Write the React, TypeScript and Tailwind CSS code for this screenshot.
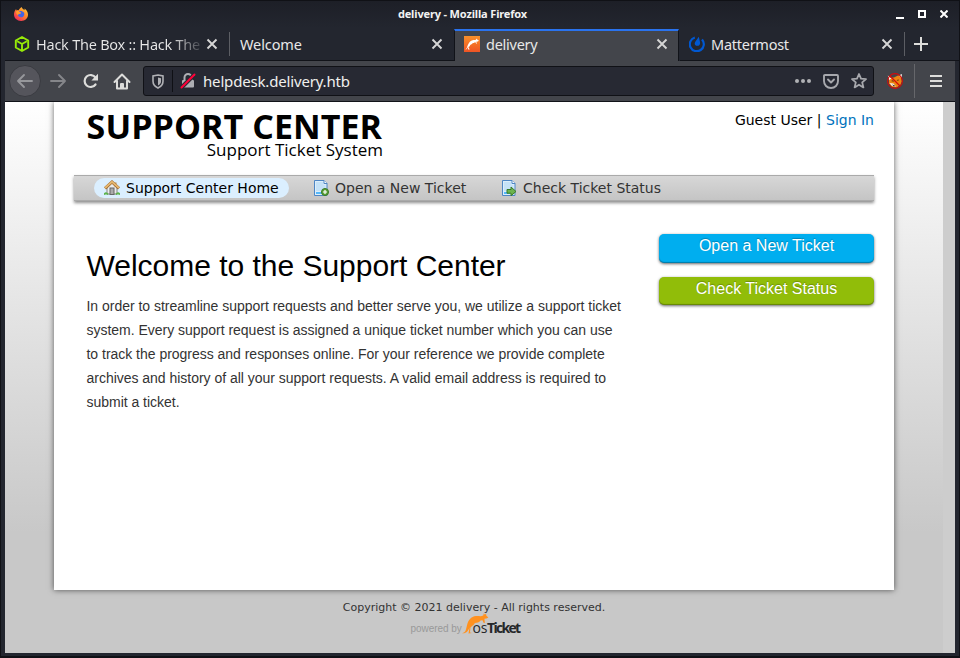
import type { ReactNode } from "react";

const uiFont = "font-['Noto_Sans',sans-serif]";
const pageFont = "font-['DejaVu_Sans',sans-serif]";
const bodyFont = "font-['Liberation_Sans',sans-serif]";

function FirefoxIcon() {
  return (
    <svg width="16" height="16" viewBox="0 0 16 16" className="mb-[1px] ml-[12px]">
      <defs>
        <linearGradient id="ff" x1="1" y1="0" x2=".2" y2="1">
          <stop offset="0" stopColor="#ffdf45" />
          <stop offset=".45" stopColor="#ff8a2b" />
          <stop offset="1" stopColor="#f0245c" />
        </linearGradient>
      </defs>
      <path d="M8.700 1c.2 1.500 1.600 2 3 3.200 0-.8-.3-1.400-.5-1.800C13.500 3.600 15 6 15 8.600 15 12.500 12 15 8.100 15 4 15 1 12.300 1 8.600c0-2.300.8-4 2.100-5.600l.4 1.700c.5-.5 1.500-.6 2.200-.4C6.300 3 7.300 1.700 8.700 1z" fill="url(#ff)" />
      <path d="M5.500 5.300c1.300-.8 4.600-.4 5.500 1.400.9 2-.4 4.600-2.900 4.600-2.100 0-3.600-1.500-3.300-3.200 1 .6 2.300.1 3.100-.8-1 0-1.900-.7-2.400-2z" fill="#4463e6" />
      <path d="M3.200 5c1-.8 2.300-.5 3.100.5 1 .9 2 .8 1.700 1.400-.2.700-1.300.6-2 .9-.6.300-.4 1.100-1.200 1.100C3.500 8.700 2.900 6.500 3.200 5z" fill="#ff9a2c" />
    </svg>
  );
}

function CloseIcon() {
  return (
    <svg width="12" height="12" viewBox="0 0 12 12" className="shrink-0">
      <path d="M1.500 1.500l9 9M10.500 1.500l-9 9" stroke="#d6d6d6" strokeWidth="1.900" />
    </svg>
  );
}

function CubeIcon() {
  return (
    <svg width="16" height="16" viewBox="0 0 16 16" fill="none" stroke="#97ea08" strokeWidth="1.900" strokeLinejoin="round" className="shrink-0">
      <path d="M8 1l6.200 3.500v7L8 15l-6.200-3.500v-7zM3.200 5.200L8 8l4.800-2.800M8 8v6" />
    </svg>
  );
}

function KangarooIcon() {
  return (
    <svg width="16" height="16" viewBox="0 0 16 16" className="shrink-0">
      <defs>
        <linearGradient id="kg" x1="0" y1="0" x2="0" y2="1">
          <stop offset="0" stopColor="#f9902a" />
          <stop offset="1" stopColor="#ef5425" />
        </linearGradient>
      </defs>
      <rect width="16" height="16" fill="url(#kg)" />
      <path d="M1.300 13.700c1.500-.8 1.800-2.800 2.600-4.600C5 6.500 6.500 4.600 8.600 4.200c1.300-.3 2.300 0 3.300-.4l.8-1.300.5 1L15 4.700l-1.200.7-1.500.3.700 2.200-.8-.3-1.100-1.500c-.6.900-1.500 1.100-2.500 1.200-.5.900-1.500 1-2.300 1.700l-1.600 2.500.9 2H4.200l-.2-1 .6-2.400c-.8 1.600-1.500 3.400-3.300 3.600z" fill="#fff" />
    </svg>
  );
}

function MattermostIcon() {
  return (
    <svg width="16" height="16" viewBox="0 0 16 16" className="shrink-0">
      <path d="M5.800 1.500A7 7 0 1 0 13 3.500" fill="none" stroke="#0058d2" strokeWidth="2.200" />
      <path d="M9.800.8l1.300 5.600c.3 2-1 3.400-2.800 3.400-2.300 0-3.300-2.200-2-4z" fill="#0058d2" />
    </svg>
  );
}

function Tab({ icon, label, active, fade, divider }: { icon?: ReactNode; label: string; active?: boolean; fade?: boolean; divider?: boolean }) {
  return (
    <div className={active
      ? "-ml-[1px] mr-[1px] mt-[1px] flex h-[32px] w-[225px] items-center border-x border-t-2 border-x-[#111319] border-t-[#2a73ee] bg-[#43454b] pb-[4px] pl-[9px] pr-[10px]"
      : "flex h-[33px] w-[225px] items-center border-b border-[#111319] pl-[9px] pr-[12px]"}>
      {icon}
      <span className={fade
        ? "ml-[6px] w-[165px] overflow-hidden whitespace-nowrap bg-[linear-gradient(to_right,#e8e8e8_82%,#23262f_103%)] bg-clip-text text-[14.5px] leading-[20px] tracking-[-0.240px] text-transparent"
        : icon ? "ml-[6px] whitespace-nowrap text-[14.5px] leading-[20px] tracking-[-0.260px] text-[#e8e8e8]" : "whitespace-nowrap pl-[1px] text-[14.5px] leading-[20px] tracking-[-0.100px] text-[#e8e8e8]"}>
        {label}
      </span>
      <span className="ml-auto"><CloseIcon /></span>
      {divider && <span className="-mr-[12px] ml-[11px] h-[24px] w-px bg-[#5c5e64]" />}
    </div>
  );
}

function Toolbar() {
  return (
    <div className="mx-[5px] flex h-[41px] items-center border-b border-[#111319] bg-[#43454b]">
      <div className="ml-[4px] flex h-8 w-8 items-center justify-center rounded-full border border-[#3a3b41] bg-[#55555c]">
        <svg width="18" height="16" viewBox="0 0 18 16" fill="none" stroke="#96979b" strokeWidth="1.900" strokeLinecap="round" strokeLinejoin="round"><path d="M16 8H2M8 2L2 8l6 6" /></svg>
      </div>
      <svg className="ml-[8px]" width="18" height="16" viewBox="0 0 18 16" fill="none" stroke="#85868a" strokeWidth="1.900" strokeLinecap="round" strokeLinejoin="round"><path d="M2 8h14M10 2l6 6-6 6" /></svg>
      <svg className="ml-[16px]" width="16" height="16" viewBox="0 0 16 16"><path d="M12.500 11.500A6 6 0 1 1 12.500 4.500" fill="none" stroke="#dddddb" strokeWidth="2.200" strokeLinecap="round" /><path d="M15 .8v6.700H8.400z" fill="#dddddb" /></svg>
      <svg className="ml-[14px]" width="18" height="17" viewBox="0 0 18 17" fill="none" stroke="#dddddb" strokeWidth="2" strokeLinecap="round" strokeLinejoin="round"><path d="M1.500 9L9 1.500 16.500 9M4 8v7.500h10V8M8 15v-4h2v4" /></svg>
      <div className="ml-[12px] flex h-[30px] w-[731px] items-center rounded-[3px] border border-[#101116] bg-[#272933]">
        <svg className="ml-[8px]" width="12" height="15" viewBox="0 0 12 15"><path d="M6 1l5 1v5.200c0 3-2 5.300-5 6.800-3-1.500-5-3.800-5-6.800V2z" fill="none" stroke="#b0b1b5" strokeWidth="1.600" /><path d="M6 3.500l3 .7v3.200c0 1.600-1.100 2.900-3 4z" fill="#b0b1b5" /></svg>
        <div className="ml-[8px] h-[22px] w-px bg-[#0f1015]" />
        <svg className="ml-[7px]" width="16" height="16" viewBox="0 0 16 16"><path d="M4.500 7V4.500a3.500 3.500 0 0 1 7 0V7" fill="none" stroke="#adaeb3" strokeWidth="2" /><rect x="2" y="7" width="12" height="7.500" rx="1" fill="#adaeb3" /><path d="M1.500 14.500l13-13" stroke="#272933" strokeWidth="4" /><path d="M1.500 14.500l13-13" stroke="#ff0039" strokeWidth="2" strokeLinecap="round" /></svg>
        <span className="ml-[7px] text-[15px] leading-5 tracking-[-0.170px] text-[#f0f0ee]">helpdesk.delivery.htb</span>
        <svg className="ml-auto" width="16" height="4" viewBox="0 0 16 4" fill="#b0b1b5"><circle cx="2" cy="2" r="2" /><circle cx="8" cy="2" r="2" /><circle cx="14" cy="2" r="2" /></svg>
        <svg className="ml-[12px]" width="16" height="15" viewBox="0 0 16 15" fill="none" stroke="#a7a8ad" strokeWidth="1.900" strokeLinecap="round" strokeLinejoin="round"><path d="M2 1h12q1 0 1 1v5c0 4-3 7-7 7s-7-3-7-7V2q0-1 1-1zM5 5.500l3 3 3-3" /></svg>
        <svg className="ml-[12px] mr-[6px]" width="16" height="16" viewBox="0 0 16 16" fill="none" stroke="#a7a8ad" strokeWidth="1.800" strokeLinejoin="round"><path d="M8 1l2 4.700 5 .4-3.800 3.300 1.200 5L8 11.700l-4.400 2.700 1.200-5L1 6.100l5-.4z" /></svg>
      </div>
      <svg className="ml-[13px]" width="16" height="16" viewBox="0 0 16 16"><path d="M2 5l5-.5L11 2.500l3 1.500.8 4.500-1.500 3.500-3.800 2.500-4.500-.5L2 10.500z" fill="#ed8411" /><path d="M.8 2.500L2 7l2.500-1.500zM15 1l-3.500 1.500L14.500 5zM2.500 10l4 .5 2.500 3-4-.5z" fill="#f5eee4" /><path d="M5 11.500l3 1-1 1z" fill="#222" /><path d="M4 8l2-1 1 2zM9.500 7.500l2-1.500v2z" fill="#7a3d0c" /><circle cx="8" cy="8" r="7.400" fill="none" stroke="#d20b0b" strokeWidth="1.100" /><path d="M3 3l10 10" stroke="#d20b0b" strokeWidth="1.200" /></svg>
      <div className="ml-[11px] h-[34px] w-px bg-[#66676b]" />
      <svg className="ml-[15px]" width="12" height="12" viewBox="0 0 12 12" fill="#dddddb"><path d="M0 0h12v2H0zM0 5h12v2H0zM0 10h12v2H0z" /></svg>
    </div>
  );
}

function HouseIcon() {
  return (
    <svg width="16" height="16" viewBox="0 0 16 16" className="shrink-0">
      <path d="M3 7l5-4.500L13 7v7H3z" fill="#ececec" stroke="#858585" />
      <path d="M10.500 2.500h2v4h-2z" fill="#b78750" />
      <rect x="6" y="8" width="4" height="6.500" fill="#aaa" stroke="#666" />
      <path d="M1 8.300L8 2l7 6.300" fill="none" stroke="#9c6728" strokeWidth="3" />
      <path d="M1 8L8 1.700 15 8" fill="none" stroke="#e5b670" strokeWidth="1.900" />
      <path d="M0 14.500q2-3 4 0M12 14.500q2-3 4 0" stroke="#5cb34a" strokeWidth="1.500" fill="#5cb34a" />
    </svg>
  );
}

function PageIcon({ arrow }: { arrow?: boolean }) {
  return (
    <svg width="16" height="16" viewBox="0 0 16 16" className="shrink-0">
      <path d="M1.500.5h9.500l3 3v12H1.500z" fill="#dceefb" stroke="#4e86c4" />
      <path d="M3 2h7.500v3h2v6H3z" fill="#c5e2f7" />
      <path d="M11 .5v3h3" fill="#fff" stroke="#4e86c4" />
      <path d="M3 12h6v2H3z" fill="#55b8fa" />
      {arrow ? (
        <path d="M6 9.500h4V7l5 4.500-5 4.200v-2.500H6z" fill="#6db44d" stroke="#397b26" />
      ) : (
        <><circle cx="12" cy="12" r="3.500" fill="#5ea33a" stroke="#377821" /><path d="M12 10v4M10 12h4" stroke="#fff" strokeWidth="1.200" /></>
      )}
    </svg>
  );
}

function OsTicketLogo() {
  return (
    <div className="mt-[-2px] flex h-[22px] items-end justify-center pr-[18px]">
      <span className="w-[50px] whitespace-nowrap pb-[1px] text-[10px] leading-[13px] tracking-[-0.060px] text-[#999] font-['Liberation_Sans',sans-serif]">powered by</span>
      <svg width="28" height="22" viewBox="0 0 28 22" className="mb-[1px] mr-[-16px]">
        <path d="M1 20.300c4-.8 4-4 5-8 1-5 4-8.800 9-9.300 3-.3 5 1 7.500-.7L22.500.5l1.500 1 1-1 .4 2.200 2 1.800-2 1-2 .3.500 4.200-1.400-.2-1-2.500-2 .3c-1.200 2.400-4 2-6 2.800-1 2.500-3.200 2.400-4 4.200L9 19.500l2 .6-3.500.4 1-6c-1 3-3 6.300-7.500 5.800z" fill="#ff911f" />
      </svg>
      <span className="-mb-[1px] whitespace-nowrap text-[14px] leading-[18px] text-[#252729] font-['Open_Sans',sans-serif]"><span className="tracking-[-0.300px]">os</span><span className="font-bold tracking-[-1.700px]">Ticket</span></span>
    </div>
  );
}

export default function App() {
  return (
    <div className={`flex h-[658px] w-[960px] flex-col overflow-hidden border border-b-2 border-[#101116] bg-[#23262f] ${uiFont}`}>
      <div className="flex h-[27px] items-center bg-linear-to-b from-[#1d1f27] to-[#23262f]">
        <FirefoxIcon />
        <span className="w-[867px] pb-[2px] text-center text-[11px] font-bold leading-[16px] tracking-[-0.150px] text-[#f2f2f2]">delivery - Mozilla Firefox</span>
        <svg width="50" height="10" viewBox="0 0 50 10" fill="none" stroke="#fff" strokeWidth="2" className="-ml-[1px] mb-[2px]"><path d="M1 9h8M24 2h6v6h-6z" /></svg>
        <svg width="8" height="8" viewBox="0 0 8 8" stroke="#fff" strokeWidth="2" className="-ml-[5px] mb-[1px]"><path d="M.5.500l7 7M7.500.500l-7 7" /></svg>
      </div>
      <div className="flex h-[33px] shrink-0 items-center pl-[4px]">
        <Tab icon={<CubeIcon />} label="Hack The Box :: Hack The" fade divider />
        <Tab label="Welcome" />
        <Tab icon={<KangarooIcon />} label="delivery" active />
        <Tab icon={<MattermostIcon />} label="Mattermost" divider />
        <div className="flex h-[33px] flex-1 items-center border-b border-[#111319] pl-[9px]">
          <svg width="14" height="14" viewBox="0 0 14 14"><path d="M7 0v14M0 7h14" stroke="#dddddb" strokeWidth="2" /></svg>
        </div>
      </div>
      <div className="-mx-[1px] shrink-0"><Toolbar /></div>
      <div className={`ml-[4px] flex h-[551px] w-[950px] shrink-0 ${pageFont}`}>
        <div className="h-full w-[938px] overflow-hidden bg-linear-to-b from-white to-[#c8c8c8] to-[430px] pl-[49px]">
          <main className="h-[488px] w-[840px] bg-white px-[20px] shadow-[0_0_6px_rgba(0,0,0,0.6)]">
            <header className="flex h-[73px] justify-between pl-[12px]">
              <div className="w-[297px] pt-[11px] text-right text-black font-['Open_Sans',sans-serif]">
                <div className="h-[27px] whitespace-nowrap pr-[1px] text-[34px] font-bold leading-[27px] tracking-[0.050px]">SUPPORT CENTER</div>
                <div className="whitespace-nowrap text-[17px] leading-[20px]">Support Ticket System</div>
              </div>
              <div className="pt-[8px] text-[14px] leading-[20px] text-black">Guest User | <a className="text-[#0072bc]">Sign In</a></div>
            </header>
            <nav className="flex h-[26px] w-[800px] items-center border-t border-[#aaa] bg-linear-to-b from-[#d7d7d7] to-[#c4c4c4] pb-[1px] pl-[20px] text-[14px] leading-[20px] text-[#333] shadow-[0_2px_3px_rgba(0,0,0,0.45),inset_0_-1px_0_#aaa]">
              <a className="flex h-[20px] w-[195px] items-center gap-[6px] whitespace-nowrap rounded-full bg-[#dbefff] pl-[10px] text-black"><HouseIcon />Support Center Home</a>
              <a className="ml-[24px] flex w-[188px] items-center gap-[6px] whitespace-nowrap"><PageIcon />Open a New Ticket</a>
              <a className="flex items-center gap-[6px] whitespace-nowrap"><PageIcon arrow />Check Ticket Status</a>
            </nav>
            <div className={`flex justify-between pl-[12.500px] ${bodyFont}`}>
              <section>
                <h1 className="mt-[47px] text-[30px] leading-[36px] tracking-[-0.020px] text-black">Welcome to the Support Center</h1>
                <p className="mt-[10px] whitespace-nowrap text-[14px] leading-[24px] tracking-[-0.020px] text-[#333]">
                  In order to streamline support requests and better serve you, we utilize a support ticket<br />
                  system. Every support request is assigned a unique ticket number which you can use<br />
                  to track the progress and responses online. For your reference we provide complete<br />
                  archives and history of all your support requests. A valid email address is required to<br />
                  submit a ticket.
                </p>
              </section>
              <aside className="mt-[33px] flex w-[215px] flex-col gap-[14px] text-center text-[16px] leading-[23px] text-white">
                <button className="h-[29px] rounded-[5px] bg-[#00aeef] pb-[6px] shadow-[0_1px_3px_rgba(0,0,0,0.6),inset_0_-1px_1px_rgba(0,0,0,0.3)] [text-shadow:0_-1px_1px_rgba(0,0,0,0.25)]">Open a New Ticket</button>
                <button className="h-[28px] rounded-[5px] bg-[#91bd09] pb-[5px] shadow-[0_1px_3px_rgba(0,0,0,0.6),inset_0_-1px_1px_rgba(0,0,0,0.3)] [text-shadow:0_-1px_1px_rgba(0,0,0,0.25)]">Check Ticket Status</button>
              </aside>
            </div>
          </main>
          <footer className="w-[840px] pt-[10px] text-center text-[11px] leading-[16px] text-[#333]">
            Copyright © 2021 delivery - All rights reserved.
            <OsTicketLogo />
          </footer>
        </div>
        <div className="h-full w-[12px] bg-[#cdcdcd]" />
      </div>
    </div>
  );
}
